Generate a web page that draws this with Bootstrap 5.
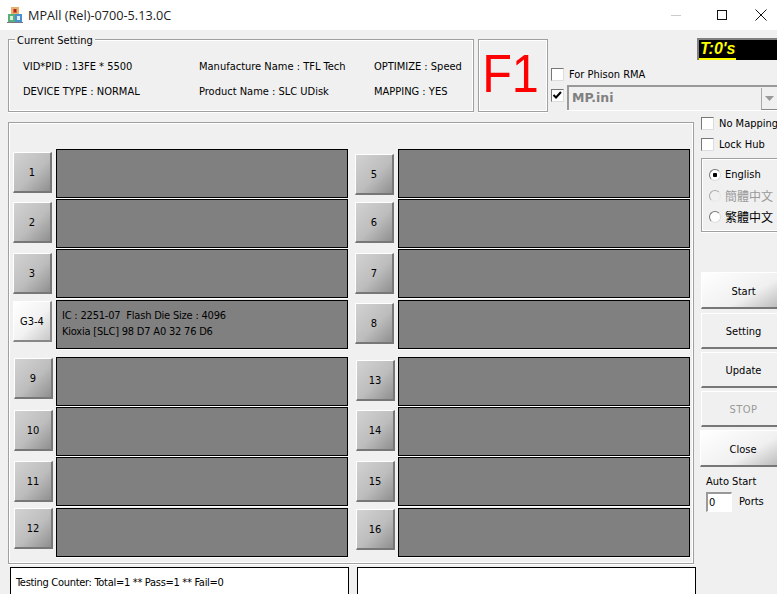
<!DOCTYPE html>
<html lang="en"><head><meta charset="utf-8"><title>MPAll</title>
<link rel="stylesheet" href="https://cdn.jsdelivr.net/npm/bootstrap@5.3.0/dist/css/bootstrap.min.css">
<style>
html,body{height:594px;overflow:hidden}
body{background:#f0f0f0;font:11px/16px "DejaVu Sans Condensed","DejaVu Sans",sans-serif;font-stretch:condensed;color:#000}
.titlebar{height:30px;background:#fff;padding-left:7px;font:12.7px "Open Sans",sans-serif;color:#222}
.titlebar svg.appicon{margin-right:5px}
.winctl{width:46px;height:30px}
.winctl.closing{width:32px}
.toprow{padding:9px 0 0 8px;height:82px}
.etched{border:1px solid #a0a0a0;box-shadow:0 0 0 1px #fff inset,0 1px 0 #fff}
.setgroup{width:466px;height:73px;padding:14px 0 0 14px;display:grid;grid-template-columns:176px 175px auto;grid-auto-rows:25px;align-items:center;white-space:nowrap}
.setcap{position:absolute;left:6px;top:-7px;background:#f0f0f0;padding:0 2px}
.f1box{width:70px;height:73px;margin-left:4px;color:#f00;font:54px/66px "Liberation Sans",sans-serif;text-align:center;padding-right:4px}
.f1box span{display:inline-block;transform:scaleX(.9)}
.rmacol{margin-left:3px;width:226px}
.timerbox{width:80px;height:22px;margin-left:auto;background:#000;border:solid #808080;border-width:2px 0 0 2px;margin-top:-1px}
.timerbox span{display:inline-block;color:#ff0;font:italic bold 16px/17px "Liberation Sans",sans-serif;padding:0 0 1px 1px;border-bottom:2px solid #ff0}
.wbox{appearance:none;-webkit-appearance:none;display:block;flex:none;width:13px;height:13px;margin:0;background:#fff;border:1px solid #777;border-right-color:#ddd;border-bottom-color:#ddd;border-radius:0}
.wbox.on{background:#fff url("data:image/svg+xml,%3Csvg xmlns='http://www.w3.org/2000/svg' viewBox='0 0 13 13'%3E%3Cpath d='M2.5 6l2.5 2.5 5-5.5' fill='none' stroke='%23000' stroke-width='2'/%3E%3C/svg%3E") center/13px no-repeat}
.rmarow{margin-top:8px;height:13px}
.rmarow label{margin-left:5px}
.comborow{margin-top:8px}
.combobox{margin-left:3px;flex:1;height:25px;background:#f0f0f0;border:solid #999;border-width:2px 0 0 2px;box-shadow:0 1px 0 #fff;color:#808080;font:bold 12.500px/21px "DejaVu Sans",sans-serif;padding-left:3px;margin-top:-4px}
.combarrow{width:16px;height:22px;margin-top:1px;border-left:1px solid #aaa;border-bottom:1px solid #888;background:#f0f0f0}
.midrow{height:442px}
.slotpanel{width:686px;height:442px;margin:10px 0 0 8px;padding:26px 0 0 4px}
.slotrow{display:flex;gap:7px;height:49px;margin-bottom:1px}
.slotrow.g2{margin-bottom:2px}
.slotrow.g8{margin-bottom:8px}
.slot{display:flex;width:335px;gap:4px;align-items:flex-start}
.slot.shift{gap:3px}
.slot.shift .pbtn{margin-left:1px}
.pbtn{flex:none;width:39px;height:41px;padding:2px 0 0;border:0;border-top:1px solid #fff;border-left:1px solid #fff;border-right:2px solid #777;border-bottom:2px solid #777;border-radius:0;background:linear-gradient(135deg,#d2d2d2,#bdbdbd 55%,#8f8f8f);color:#000;font:inherit}
.pbtn.live{background:linear-gradient(135deg,#fff,#f2f2f2 55%,#c8c8c8);border-right-color:#888;border-bottom-color:#888}
.o0{margin-top:0}.o1{margin-top:1px}.o3{margin-top:3px}.o4{margin-top:4px}.o5{margin-top:5px}
.dev{flex:1;height:49px;background:#808080;border:1px solid #000;box-shadow:0 1px 0 #fff;padding:7px 0 0 5px;letter-spacing:-.2px}
.botrow{margin:3px 0 0 10px;gap:8px}
.countbox{background:#fff;border:1px solid #000;height:40px;padding:7px 0 0 5px;letter-spacing:-.3px}
.cb1{width:339px}.cb2{width:339px}
.side{margin:1px 0 0 5px;flex:1;min-width:0}
.siderow{height:21px;white-space:nowrap}
.siderow label{margin-left:5px}
.langbox{height:74px;margin-top:3px;padding:5px 0 0 7px;width:90px;border-right:0}
.langrow{height:21px;white-space:nowrap}
.rad{appearance:none;-webkit-appearance:none;flex:none;width:12px;height:12px;margin:0 4px 0 0;border-radius:50%;background:#fff;border:1px solid #777;border-right-color:#ddd;border-bottom-color:#ddd}
.rad.on{background:radial-gradient(circle,#000 2px,#fff 2.5px)}
.rad:disabled{background:#f0f0f0;border-color:#aaa #e8e8e8 #e8e8e8 #aaa}
.cjk{font-family:"Noto Sans CJK TC",sans-serif;font-size:12px;line-height:16px}
.muted{color:#999}
.actbtn{display:block;width:84px;height:36px;padding:2px 0 0;border:0;border-top:1px solid #fff;border-left:1px solid #fff;border-bottom:2px solid #777;border-radius:0;background:#f0f0f0;color:#000;font:inherit;margin-bottom:3px}
.actbtn.shade{height:37px;padding-top:3px;margin-bottom:4px;background:linear-gradient(150deg,#fff,#f0f0f0 60%,#b5b5b5)}
.actbtn:disabled{color:#999;background:#f0f0f0;opacity:1;border-top:1px solid #fff;border-left:1px solid #fff;border-bottom:2px solid #777;letter-spacing:.5px}
.actbtn.closer{margin:1px 0 3px -1px;width:85px;height:37px}
.actstack{margin-top:40px}
.autolbl{margin:7px 0 0 5px}
.portinp{width:26px;height:20px;border:2px solid #999;border-right:1px solid #fff;border-bottom:1px solid #fff;background:#fff;padding:0 0 0 1px;font:inherit;color:#000;outline:0}
.portrow{margin:2px 0 0 5px;gap:7px}
</style></head><body>
<div class="titlebar d-flex align-items-center">
<svg class="appicon" width="16" height="16" viewBox="0 0 16 16"><rect x="4" y="0" width="8" height="7" fill="#e8b070"/><rect x="6" y="2" width="4" height="4" fill="#d06a30"/><rect x="7" y="2" width="2" height="3" fill="#b02020"/><rect x="1" y="7" width="7" height="8" fill="#58b078"/><rect x="8" y="7" width="7" height="8" fill="#4a8fd0"/><rect x="3" y="9" width="3" height="4" fill="#d8f0e0"/><rect x="10" y="9" width="3" height="4" fill="#dcecff"/><rect x="0" y="15" width="16" height="1" fill="#778"/></svg>
<span>MPAll (Rel)-0700-5.13.0C</span>
<div class="ms-auto d-flex">
<div class="winctl d-flex align-items-center justify-content-center"><svg width="12" height="12"><path d="M1 6.5h10" stroke="#ccc"/></svg></div>
<div class="winctl d-flex align-items-center justify-content-center"><svg width="12" height="12"><rect x="1.5" y="1.5" width="9" height="9" fill="none" stroke="#111"/></svg></div>
<div class="winctl closing d-flex align-items-center justify-content-center"><svg width="12" height="12"><path d="M.5.5l11 11M11.500.5l-11 11" stroke="#111" fill="none"/></svg></div>
</div></div>
<div class="toprow d-flex">
<div class="setgroup etched position-relative"><span class="setcap">Current Setting</span>
<span>VID*PID : 13FE * 5500</span><span>Manufacture Name : TFL Tech</span><span>OPTIMIZE : Speed</span>
<span>DEVICE TYPE : NORMAL</span><span>Product Name : SLC UDisk</span><span>MAPPING : YES</span></div>
<div class="f1box etched"><span>F1</span></div>
<div class="rmacol">
<div class="timerbox"><span>T:0's</span></div>
<div class="rmarow d-flex align-items-center"><input type="checkbox" class="wbox"><label>For Phison RMA</label></div>
<div class="comborow d-flex"><input type="checkbox" class="wbox on" checked><div class="combobox d-flex"><span class="flex-grow-1">MP.ini</span><span class="combarrow d-flex align-items-center justify-content-center"><svg width="9" height="5"><path d="M0 0h9L4.500 5z" fill="#999"/></svg></span></div></div>
</div></div>
<div class="midrow d-flex">
<div>
<div class="slotpanel etched">
<div class="slotrow"><div class="slot"><button class="btn pbtn o3">1</button><div class="dev"></div></div><div class="slot"><button class="btn pbtn o5">5</button><div class="dev"></div></div></div>
<div class="slotrow"><div class="slot"><button class="btn pbtn o3">2</button><div class="dev"></div></div><div class="slot"><button class="btn pbtn o3">6</button><div class="dev"></div></div></div>
<div class="slotrow g2"><div class="slot"><button class="btn pbtn o4">3</button><div class="dev"></div></div><div class="slot"><button class="btn pbtn o4">7</button><div class="dev"></div></div></div>
<div class="slotrow g8"><div class="slot"><button class="btn pbtn live o1">G3-4</button><div class="dev">IC : 2251-07&nbsp; Flash Die Size : 4096<br>Kioxia [SLC] 98 D7 A0 32 76 D6</div></div><div class="slot"><button class="btn pbtn o3">8</button><div class="dev"></div></div></div>
<div class="slotrow"><div class="slot shift"><button class="btn pbtn o1">9</button><div class="dev"></div></div><div class="slot shift"><button class="btn pbtn o3">13</button><div class="dev"></div></div></div>
<div class="slotrow"><div class="slot shift"><button class="btn pbtn o3">10</button><div class="dev"></div></div><div class="slot shift"><button class="btn pbtn o3">14</button><div class="dev"></div></div></div>
<div class="slotrow g2"><div class="slot shift"><button class="btn pbtn o4">11</button><div class="dev"></div></div><div class="slot shift"><button class="btn pbtn o4">15</button><div class="dev"></div></div></div>
<div class="slotrow"><div class="slot shift"><button class="btn pbtn o0">12</button><div class="dev"></div></div><div class="slot shift"><button class="btn pbtn o1">16</button><div class="dev"></div></div></div>
</div>
<div class="botrow d-flex"><div class="countbox cb1">Testing Counter: Total=1 ** Pass=1 ** Fail=0</div><div class="countbox cb2"></div></div>
</div>
<div class="side">
<div class="siderow d-flex align-items-center"><input type="checkbox" class="wbox"><label>No Mapping</label></div>
<div class="siderow d-flex align-items-center"><input type="checkbox" class="wbox"><label>Lock Hub</label></div>
<div class="langbox etched">
<div class="langrow d-flex align-items-center"><input type="radio" name="lg" class="rad on" checked><span>English</span></div>
<div class="langrow d-flex align-items-center"><input type="radio" name="lg" class="rad" disabled><span class="cjk muted">簡體中文</span></div>
<div class="langrow d-flex align-items-center"><input type="radio" name="lg" class="rad"><span class="cjk">繁體中文</span></div>
</div>
<div class="actstack">
<button class="btn actbtn shade">Start</button>
<button class="btn actbtn">Setting</button>
<button class="btn actbtn">Update</button>
<button class="btn actbtn" disabled>STOP</button>
<button class="btn actbtn shade closer">Close</button>
</div>
<div class="autolbl">Auto Start</div>
<div class="portrow d-flex align-items-center"><input class="portinp" value="0"><span>Ports</span></div>
</div>
</div>
</body></html>
